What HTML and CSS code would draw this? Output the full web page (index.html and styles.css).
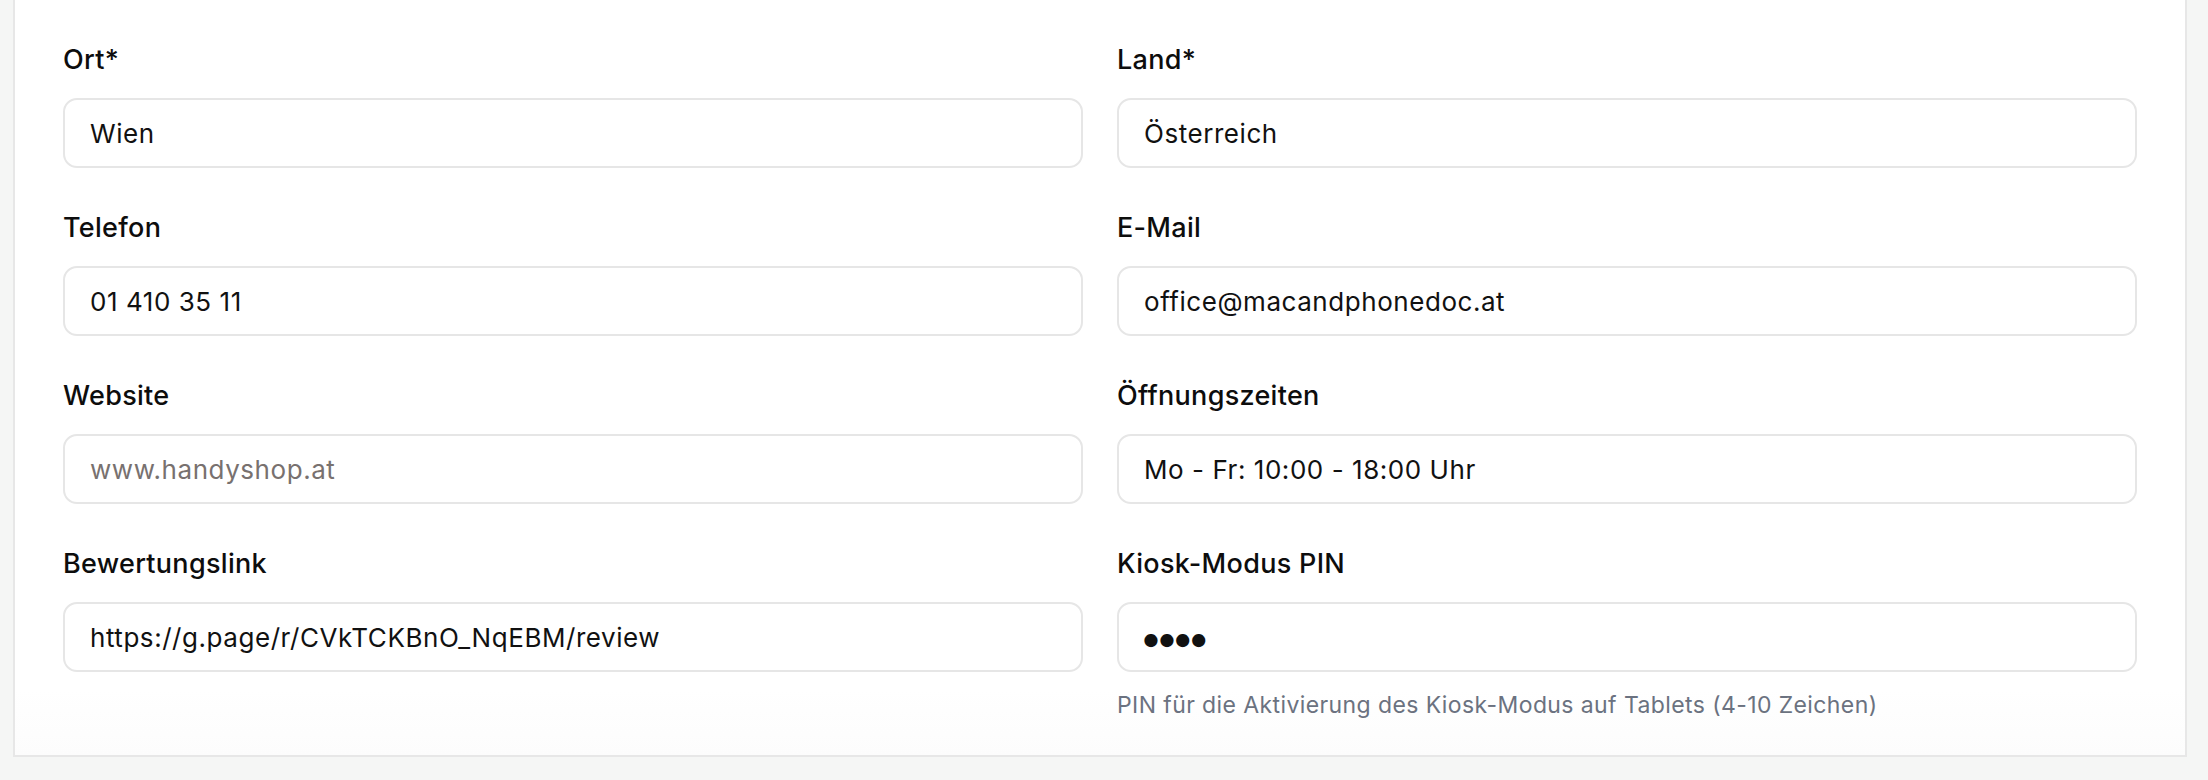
FILE: index.html
```html
<!DOCTYPE html>
<html lang="de">
<head>
<meta charset="utf-8">
<title>Shop-Einstellungen</title>
<link rel="stylesheet" href="styles.css">
</head>
<body>
<main class="page">
  <section class="card">
    <div class="form-grid">
      <div class="field field-prev" aria-hidden="true">
        <div class="input input-stub"></div>
      </div>
      <div class="field field-prev" aria-hidden="true">
        <div class="input input-stub"></div>
      </div>

      <div class="field">
        <label class="label">Ort*</label>
        <input class="input" type="text" value="Wien">
      </div>
      <div class="field">
        <label class="label">Land*</label>
        <input class="input" type="text" value="Österreich">
      </div>

      <div class="field">
        <label class="label">Telefon</label>
        <input class="input" type="text" value="01 410 35 11">
      </div>
      <div class="field">
        <label class="label">E-Mail</label>
        <input class="input" type="text" value="office@macandphonedoc.at">
      </div>

      <div class="field">
        <label class="label">Website</label>
        <input class="input" type="text" placeholder="www.handyshop.at">
      </div>
      <div class="field">
        <label class="label">Öffnungszeiten</label>
        <input class="input" type="text" value="Mo - Fr: 10:00 - 18:00 Uhr">
      </div>

      <div class="field">
        <label class="label">Bewertungslink</label>
        <input class="input" type="text" value="https://g.page/r/CVkTCKBnO_NqEBM/review">
      </div>
      <div class="field">
        <label class="label">Kiosk-Modus PIN</label>
        <input class="input input-pin" type="password" value="1234">
        <p class="hint">PIN für die Aktivierung des Kiosk-Modus auf Tablets (4-10 Zeichen)</p>
      </div>
    </div>
  </section>
</main>
</body>
</html>
```

FILE: styles.css
```css
* {
  box-sizing: border-box;
}

html, body {
  margin: 0;
  padding: 0;
  background: #f5f6f5;
  font-family: Inter, "Noto Sans", "Liberation Sans", sans-serif;
  color: #111111;
}

.page {
  padding: 0 21px 23px 13px;
}

.card {
  margin-top: -70px;
  background: #ffffff;
  border: 2px solid #e7e7e7;
  border-top: none;
  padding: 0 48px 35px 48px;
  background-image: linear-gradient(to bottom, #ffffff 92%, #fcfcfc 100%);
}

.form-grid {
  display: grid;
  grid-template-columns: 1fr 1fr;
  column-gap: 34px;
  row-gap: 42px;
  align-items: start;
}

.field {
  display: flex;
  flex-direction: column;
}

.label {
  font-size: 27px;
  line-height: 36px;
  font-weight: 500;
  letter-spacing: 0.3px;
  color: #0d0d0d;
  margin-bottom: 20px;
}

.input {
  height: 70px;
  width: 100%;
  border: 2px solid #e6e6e6;
  border-radius: 14px;
  padding: 0 25px;
  font-family: inherit;
  font-size: 26px;
  letter-spacing: 0.55px;
  color: #111111;
  background: #ffffff;
  outline: none;
}

.input::placeholder {
  color: #78716f;
}

.input-pin {
  font-size: 42px;
  font-weight: 700;
  letter-spacing: -4px;
  padding-left: 22px;
}

.hint {
  margin: 18px 0 0 0;
  font-size: 23px;
  line-height: 30px;
  letter-spacing: 0.4px;
  color: #6b7280;
}
```
